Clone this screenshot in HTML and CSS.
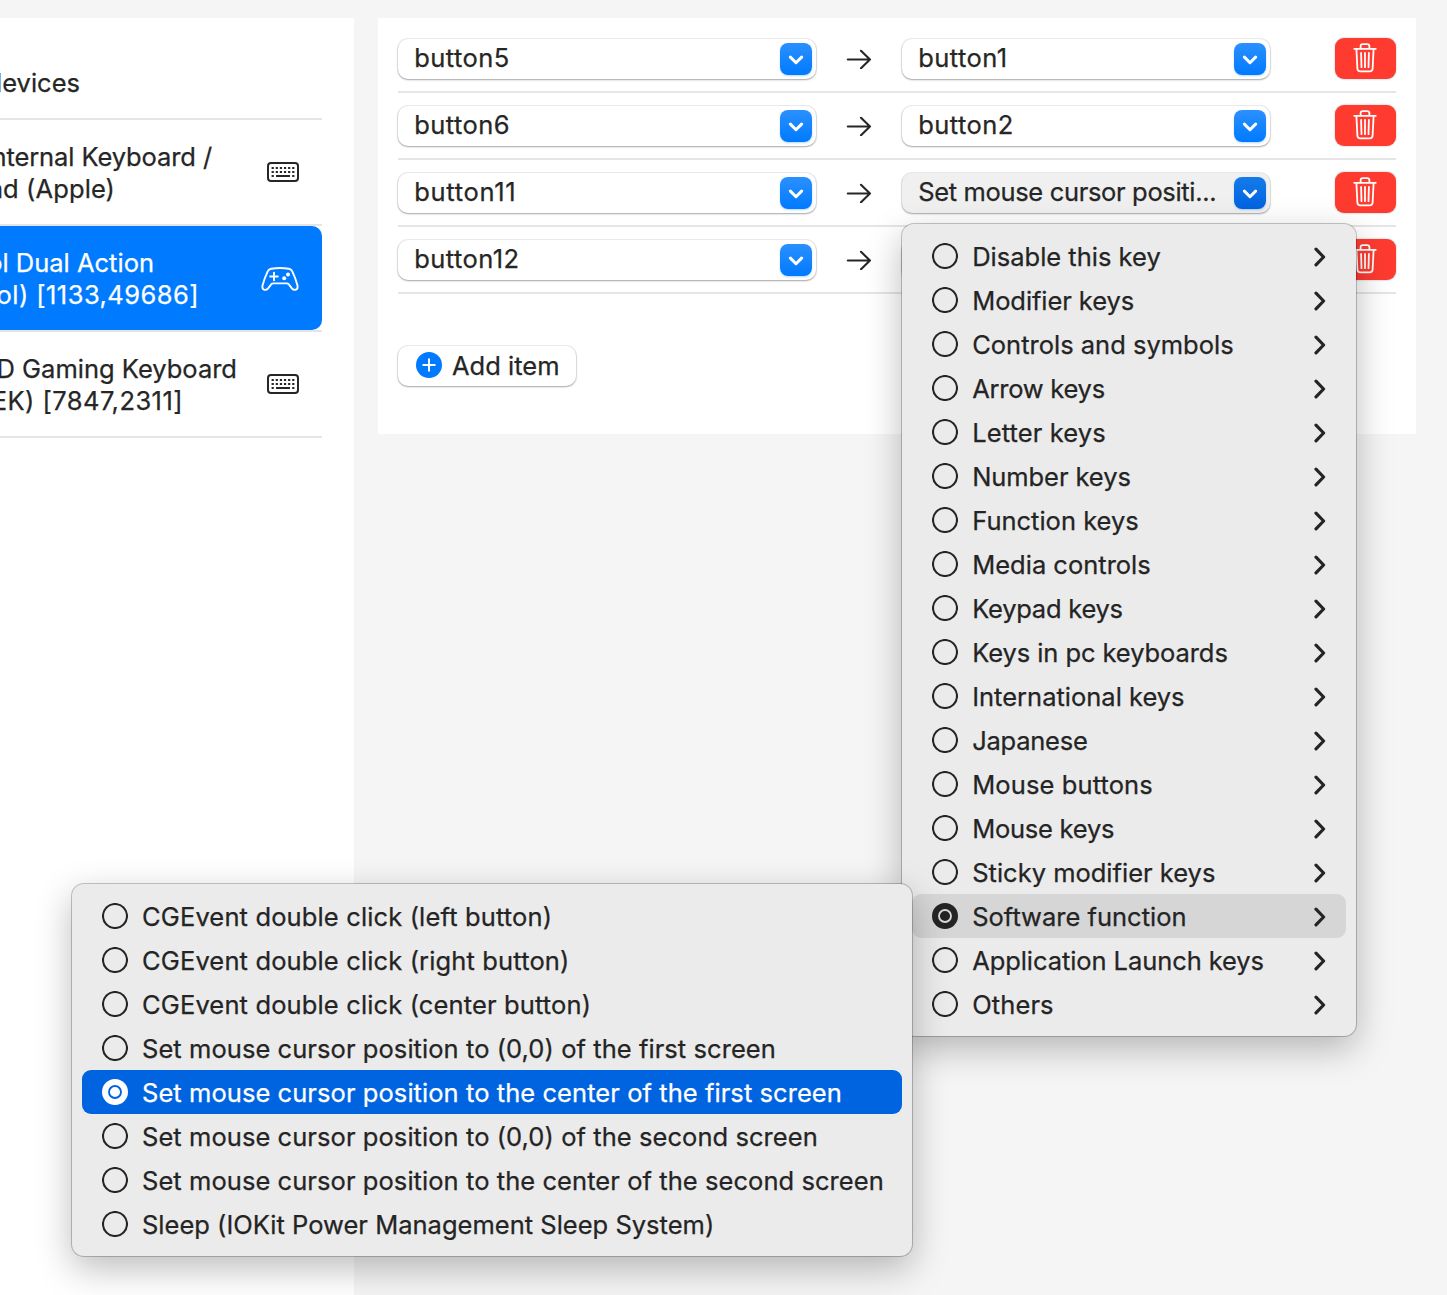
FILE: index.html
```html
<!DOCTYPE html>
<html lang="en">
<head>
<meta charset="utf-8">
<title>Simple modifications</title>
<link rel="stylesheet" href="styles.css">
</head>
<body>
<svg class="defs" width="0" height="0" aria-hidden="true">
  <symbol id="radio" viewBox="0 0 26 26"><circle cx="13" cy="13" r="12" fill="none" stroke="currentColor" stroke-width="2.1"/></symbol>
  <symbol id="radio-on" viewBox="0 0 26 26"><circle cx="13" cy="13" r="13" fill="currentColor"/><circle class="ring" cx="13" cy="13" r="6" fill="none" stroke-width="1.9"/></symbol>
  <symbol id="right" viewBox="0 0 12 20"><path d="M2 2.2 9.6 10 2 17.8" fill="none" stroke="currentColor" stroke-width="3.2" stroke-linecap="round" stroke-linejoin="round"/></symbol>
  <symbol id="down" viewBox="0 0 16 10"><path d="M2.4 2.1 8 7.7l5.6-5.6" fill="none" stroke="currentColor" stroke-width="3" stroke-linecap="round" stroke-linejoin="round"/></symbol>
  <symbol id="arrow" viewBox="0 0 26 20"><path d="M1.800 10.500H24M15 1.800 24 10.500l-9 8.700" fill="none" stroke="currentColor" stroke-width="2.1" stroke-linecap="round" stroke-linejoin="round"/></symbol>
  <symbol id="trash" viewBox="0 0 24 30"><path d="M1.2 5.8h21.6M7.6 5.6V3.4q0-2.3 2.3-2.3h4.2q2.3 0 2.3 2.3v2.2M3.4 6l1 19.8q.2 2.6 2.8 2.6h9.6q2.6 0 2.8-2.6l1-19.8M8.1 10l.4 14.2M12 10v14.2M15.9 10l-.4 14.2" fill="none" stroke="currentColor" stroke-width="1.8" stroke-linecap="round" stroke-linejoin="round"/></symbol>
  <symbol id="keyboard" viewBox="0 0 32 20"><rect x="1" y="1" width="30" height="18" rx="3" fill="none" stroke="currentColor" stroke-width="2"/><path d="M4.600 6h22.800M4.600 10h22.800" fill="none" stroke="currentColor" stroke-width="2.2" stroke-dasharray="2.2 1.920"/><path d="M4.600 14h2.200M9 14h14M25.200 14h2.200" fill="none" stroke="currentColor" stroke-width="2.2"/></symbol>
  <symbol id="gamepad" viewBox="0 0 38 24"><path d="M10.2 1.700Q19 .3 27.800 1.700q2.400.4 3.500 2.700 3.300 7 5.200 14.200.6 3.600-2 4.200-2 .5-3.600-1.400l-3.300-4.200q-.7-.8-1.800-.8H12.200q-1.100 0-1.800.8l-3.300 4.200q-1.600 1.900-3.600 1.400-2.600-.6-2-4.200Q3.400 11.400 6.700 4.400q1.100-2.300 3.500-2.700z" fill="none" stroke="currentColor" stroke-width="1.9" stroke-linejoin="round"/><path d="M9.200 9.500h7.600M13 5.700v7.600" stroke="currentColor" stroke-width="2" stroke-linecap="round"/><circle cx="27" cy="7.500" r="2" fill="currentColor"/><circle cx="23.200" cy="11.200" r="2" fill="currentColor"/></symbol>
</svg>

<div class="window">
  <aside class="sidebar">
    <div class="device"><div class="name"><span class="w-all">devices</span></div></div>
    <div class="device">
      <div class="name"><span class="w-int">Internal Keyboard /</span><span class="w-apple">ad (Apple)</span></div>
      <svg class="kb"><use href="#keyboard"/></svg>
    </div>
    <div class="device selected">
      <div class="name"><span class="w-dual">ol Dual Action</span><span class="w-dual2 digits">ol) [1133,49686]</span></div>
      <svg class="pad"><use href="#gamepad"/></svg>
    </div>
    <div class="device">
      <div class="name"><span class="w-game">D Gaming Keyboard</span><span class="w-ek digits">EK) [7847,2311]</span></div>
      <svg class="kb"><use href="#keyboard"/></svg>
    </div>
  </aside>

  <main class="panel">
    <div class="row">
      <div class="select from digits">button5<span class="cap"><svg><use href="#down"/></svg></span></div>
      <svg class="arrow"><use href="#arrow"/></svg>
      <div class="select to digits">button1<span class="cap"><svg><use href="#down"/></svg></span></div>
      <div class="delete"><svg><use href="#trash"/></svg></div>
    </div>
    <div class="row">
      <div class="select from digits">button6<span class="cap"><svg><use href="#down"/></svg></span></div>
      <svg class="arrow"><use href="#arrow"/></svg>
      <div class="select to digits">button2<span class="cap"><svg><use href="#down"/></svg></span></div>
      <div class="delete"><svg><use href="#trash"/></svg></div>
    </div>
    <div class="row">
      <div class="select from digits wide">button11<span class="cap"><svg><use href="#down"/></svg></span></div>
      <svg class="arrow"><use href="#arrow"/></svg>
      <div class="select to pressed">Set mouse cursor positi...<span class="cap"><svg><use href="#down"/></svg></span></div>
      <div class="delete"><svg><use href="#trash"/></svg></div>
    </div>
    <div class="row">
      <div class="select from digits">button12<span class="cap"><svg><use href="#down"/></svg></span></div>
      <svg class="arrow"><use href="#arrow"/></svg>
      <div class="select to"><span class="cap"><svg><use href="#down"/></svg></span></div>
      <div class="delete"><svg><use href="#trash"/></svg></div>
    </div>
    <div class="add">
      <svg viewBox="0 0 26 26"><circle cx="13" cy="13" r="13" fill="#007aff"/><path d="M13 7.300v11.400M7.300 13h11.400" stroke="#fff" stroke-width="2" stroke-linecap="round"/></svg>
      <span>Add item</span>
    </div>
  </main>
</div>

<ul class="menu main-menu">
  <li><svg class="radio"><use href="#radio"/></svg><span>Disable this key</span><svg class="more"><use href="#right"/></svg></li>
  <li><svg class="radio"><use href="#radio"/></svg><span class="snug">Modifier keys</span><svg class="more"><use href="#right"/></svg></li>
  <li><svg class="radio"><use href="#radio"/></svg><span>Controls and symbols</span><svg class="more"><use href="#right"/></svg></li>
  <li><svg class="radio"><use href="#radio"/></svg><span class="tight">Arrow keys</span><svg class="more"><use href="#right"/></svg></li>
  <li><svg class="radio"><use href="#radio"/></svg><span class="loose">Letter keys</span><svg class="more"><use href="#right"/></svg></li>
  <li><svg class="radio"><use href="#radio"/></svg><span class="snug">Number keys</span><svg class="more"><use href="#right"/></svg></li>
  <li><svg class="radio"><use href="#radio"/></svg><span>Function keys</span><svg class="more"><use href="#right"/></svg></li>
  <li><svg class="radio"><use href="#radio"/></svg><span>Media controls</span><svg class="more"><use href="#right"/></svg></li>
  <li><svg class="radio"><use href="#radio"/></svg><span class="tight">Keypad keys</span><svg class="more"><use href="#right"/></svg></li>
  <li><svg class="radio"><use href="#radio"/></svg><span class="snug">Keys in pc keyboards</span><svg class="more"><use href="#right"/></svg></li>
  <li><svg class="radio"><use href="#radio"/></svg><span>International keys</span><svg class="more"><use href="#right"/></svg></li>
  <li><svg class="radio"><use href="#radio"/></svg><span class="tight">Japanese</span><svg class="more"><use href="#right"/></svg></li>
  <li><svg class="radio"><use href="#radio"/></svg><span class="loose">Mouse buttons</span><svg class="more"><use href="#right"/></svg></li>
  <li><svg class="radio"><use href="#radio"/></svg><span class="tight">Mouse keys</span><svg class="more"><use href="#right"/></svg></li>
  <li><svg class="radio"><use href="#radio"/></svg><span>Sticky modifier keys</span><svg class="more"><use href="#right"/></svg></li>
  <li class="open"><svg class="radio"><use href="#radio-on"/></svg><span>Software function</span><svg class="more"><use href="#right"/></svg></li>
  <li><svg class="radio"><use href="#radio"/></svg><span class="snug">Application Launch keys</span><svg class="more"><use href="#right"/></svg></li>
  <li><svg class="radio"><use href="#radio"/></svg><span class="loose">Others</span><svg class="more"><use href="#right"/></svg></li>
</ul>

<ul class="menu sub-menu">
  <li><svg class="radio"><use href="#radio"/></svg><span class="event">CGEvent double click (left button)</span></li>
  <li><svg class="radio"><use href="#radio"/></svg><span class="event">CGEvent double click (right button)</span></li>
  <li><svg class="radio"><use href="#radio"/></svg><span class="event">CGEvent double click (center button)</span></li>
  <li><svg class="radio"><use href="#radio"/></svg><span>Set mouse cursor position to (0,0) of the first screen</span></li>
  <li class="active"><svg class="radio"><use href="#radio-on"/></svg><span>Set mouse cursor position to the center of the first screen</span></li>
  <li><svg class="radio"><use href="#radio"/></svg><span>Set mouse cursor position to (0,0) of the second screen</span></li>
  <li><svg class="radio"><use href="#radio"/></svg><span>Set mouse cursor position to the center of the second screen</span></li>
  <li><svg class="radio"><use href="#radio"/></svg><span class="sleep">Sleep (IOKit Power Management Sleep System)</span></li>
</ul>
</body>
</html>
```
FILE: styles.css
```css
* { box-sizing: border-box; }

body {
  margin: 0;
  width: 1447px;
  height: 1295px;
  overflow: hidden;
  position: relative;
  background: #f5f5f5;
  color: #262626;
  font: 25.5px/32px Inter, "Liberation Sans", sans-serif;
  -webkit-text-stroke: .25px currentColor;
  white-space: nowrap;
}

svg { display: block; flex: none; }
.defs { position: absolute; }

.window {
  display: flex;
  align-items: flex-start;
  gap: 24px;
  height: 100%;
  padding-top: 18px;
}

/* Device list; names run off the left edge of the window */
.sidebar {
  flex: none;
  width: 354px;
  height: 100%;
  padding-right: 32px;
  background: #fff;
}
.device {
  display: flex;
  align-items: center;
  justify-content: space-between;
  height: 106px;
  padding-right: 23px;
  border-bottom: 2px solid #e5e5e5;
}
.device:first-child { height: 102px; padding-top: 28px; }
.name { padding-top: 2px; }
.name span {
  display: flex;
  justify-content: flex-end;
}
.w-all { width: 80px; }
.w-int { width: 212px; letter-spacing: -.1px; }
.w-apple { width: 115px; letter-spacing: .1px; }
.w-dual { width: 154px; }
.w-dual2 { width: 199px; }
.w-game { width: 237px; }
.w-ek { width: 183px; }
.kb { width: 32px; height: 20px; }
.pad { width: 38px; height: 24px; margin-top: 1px; }
.selected {
  position: relative;
  z-index: 0;
  color: #fff;
}
.selected::before {
  content: "";
  position: absolute;
  z-index: -1;
  inset: 0;
  border-radius: 0 10px 10px 0;
  background: #007aff;
}

/* Mapping rows */
.panel {
  flex: none;
  width: 1038px;
  height: 416px;
  padding: 8px 20px 0;
  background: #fff;
}
.row {
  display: flex;
  height: 67px;
  padding-top: 12px;
  border-bottom: 2px solid #e5e5e5;
}
.select {
  display: flex;
  height: 40px;
  margin-top: 1px;
  padding: 4px 4px 0 16.2px;
  border-radius: 10px;
  background: #fff;
  line-height: 29px;
  box-shadow: 0 0 0 1px rgba(0,0,0,.07), 0 1px 2px rgba(0,0,0,.3);
}
.from { width: 418px; }
.to { width: 368px; }
.digits { letter-spacing: .45px; }
.wide { letter-spacing: .7px; }
.pressed { background: #f0f0f0; letter-spacing: -.34px; }
.cap {
  display: flex;
  align-items: center;
  justify-content: center;
  width: 32px;
  height: 32px;
  margin-left: auto;
  border-radius: 8px;
  color: #fff;
  background: linear-gradient(#2b90ff, #007aff);
  box-shadow: 0 1px 2px rgba(0,122,255,.3);
}
.pressed .cap { background: linear-gradient(#157be9, #0063e0); }
.cap svg { width: 16px; height: 10px; margin-top: 1px; }
.arrow { width: 26px; height: 20px; margin: 11px 30px 0; }
.delete {
  display: flex;
  justify-content: center;
  width: 61px;
  height: 41px;
  margin-left: auto;
  padding: 5px 1px 0 0;
  border-radius: 9px;
  color: #fff;
  background: #ff3b30;
  box-shadow: 0 0 2px rgba(0,0,0,.3);
}
.delete svg { width: 24px; height: 30px; }
.add {
  display: flex;
  align-items: center;
  gap: 10px;
  width: 178px;
  height: 40px;
  margin-top: 52px;
  padding-left: 18px;
  border-radius: 10px;
  box-shadow: 0 0 0 1px rgba(0,0,0,.07), 0 1px 2px rgba(0,0,0,.3);
}
.add svg { width: 26px; height: 26px; margin-top: -2px; }

/* Pop-up menus */
.menu {
  position: absolute;
  margin: 0;
  padding: 10px;
  list-style: none;
  border-radius: 12px;
  background: #ebebeb;
  color: #242424;
  box-shadow: 0 0 0 1px rgba(0,0,0,.22), 0 12px 36px rgba(0,0,0,.27);
}
.main-menu { left: 902px; top: 224px; width: 454px; }
.sub-menu { left: 72px; top: 884px; width: 840px; letter-spacing: .065px; }
.menu li {
  display: flex;
  align-items: center;
  height: 44px;
  padding: 0 20px;
  border-radius: 9px;
}
.menu li span { padding: 2px 0 0 14.2px; }
.sub-menu li span { padding-left: 14px; }
.radio { width: 26px; height: 26px; }
.more { width: 12px; height: 20px; margin: 2px 0 0 auto; }
.ring { stroke: var(--ring); }
.open { --ring: #d7d7d7; background: #d6d6d6; }
.active { --ring: #0064e1; color: #fff; background: #0064e1; }
.snug { letter-spacing: -.08px; }
.tight { letter-spacing: -.25px; }
.loose { letter-spacing: .11px; }
.event { letter-spacing: .14px; }
.sleep { letter-spacing: .01px; }
```
